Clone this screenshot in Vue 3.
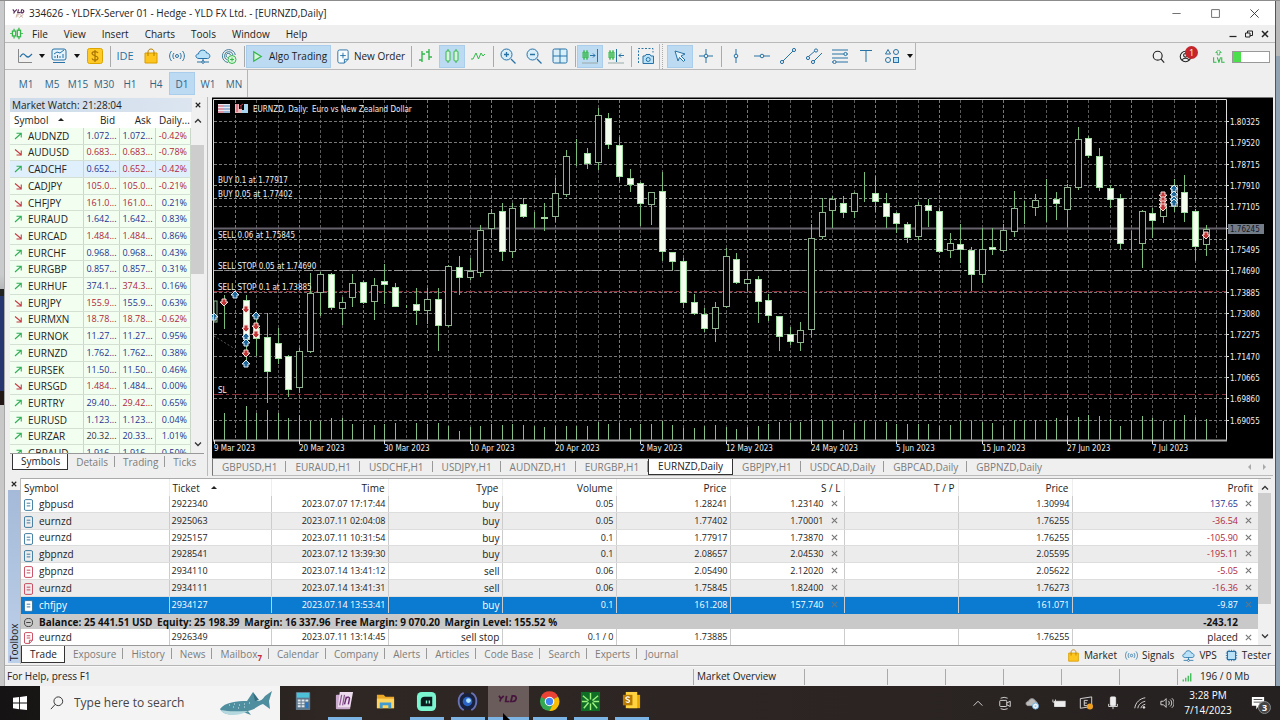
<script setup>
import { ref } from 'vue'

const I = {
  logo: '<path d="M1 3l2 3 3-3M3 6l-1 2M8 3L7 7h3M12 3l-1 4c4 1 5-3 1-4" stroke="#5a2b55" stroke-width="1.4"/><path d="M5 13l1-4h3M6 11h2M10 9l3 4M14 9l-5 4" stroke="#c4a08c"/>',
  mt: '<path d="M5 2v3M5 11v3M11 1v3M11 12v3" stroke="#35b84b" stroke-width="1.6"/><rect x="3" y="5" width="4" height="6" stroke="#35b84b" stroke-width="1.6"/><rect x="9" y="4" width="4" height="8" stroke="#35b84b" stroke-width="1.6"/><path d="M0 8h3M13 8h3" stroke="#35b84b"/>',
  line: '<path d="M1.500 1v13.500H15" stroke="#888"/><path d="M3 9c3-5 4-3 6-1s3 1 6-2" stroke="#2872a6" stroke-width="1.300"/>',
  indic: '<rect x="1" y="1" width="14" height="11" rx="2" fill="#e3f2fb"/><path d="M2 14.500h12M4 10v-2M6.500 10V7M9 10V8M12 10V6M3 6l3-2 3 1 4-3"/>',
  dollar: '<rect x=".5" y=".5" width="15" height="15" rx="2" fill="#ffc928" stroke="#dba400"/><path d="M11 5c-1-2-6-2-6 .500 0 2.500 6 2 6 4.500s-5 3-6 .500M8 2v12" stroke="#a87500" stroke-width="1.200"/>',
  bag: '<path d="M2 5h12v10H2z" fill="#ffc51f" stroke="#d79c00"/><path d="M5 8V4c0-4 6-4 6 0v4" stroke="#b88000"/>',
  signal: '<circle cx="8" cy="8" r="1.500"/><path d="M5 5c-1.500 2-1.500 4 0 6M11 5c1.500 2 1.500 4 0 6M2.500 3c-2.500 3-2.500 7 0 10M13.500 3c2.500 3 2.500 7 0 10"/>',
  cloud: '<path d="M4 10.500C0 10.500 0 6 3.500 6 4 1 11 1 11.500 5c4 0 4.500 5.500 1 5.500z" fill="#b9e1f7"/><path d="M8 10.500v3M2 14h4.500M9.500 14H14"/><circle cx="8" cy="14" r="1.300"/>',
  vps: '<path d="M7 14.500A6.500 6.500 0 1 1 14.300 7M6.500 12A4.300 4.300 0 1 1 12 7M6.500 9.500A2.200 2.200 0 1 1 9.500 7" stroke="#44809b"/><circle cx="11" cy="11.500" r="4" fill="#dcf8df" stroke="#35b84b"/><path d="M11 9.500v4M9 11.500h4" stroke="#35b84b"/>',
  play: '<path d="M4 3l8 5-8 5z" stroke="#35b84b" stroke-width="1.300" fill="#d9f5df"/>',
  order: '<path d="M5 1h7.500q1.500 0 1.500 1.500V11l-4 4H5q-2 0-2-2V3q0-2 2-2zM14 11h-4v4" fill="#f8fcff"/><path d="M8.500 4v6M5.500 7h6"/>',
  bars: '<path d="M4 3v11M1 12h3M4 6h3M11 1v11M8 4h3M11 9h3" stroke="#35b84b" stroke-width="1.400"/>',
  candles: '<path d="M4 1v14M12 1v14" stroke="#35b84b"/><rect x="2" y="3" width="4" height="10" rx="1" fill="#d8f3e0" stroke="#35b84b"/><rect x="10" y="3" width="4" height="10" rx="1" fill="#d8f3e0" stroke="#35b84b"/>',
  zig: '<path d="M1 11h2l3-6 2.500 6L11 5l2 3 2-2" stroke="#35b84b"/>',
  zin: '<circle cx="6.500" cy="6.500" r="5.500" fill="#d8effa"/><path d="M11 11l4.500 4.500M4 6.500h5M6.500 4v5" stroke-width="1.300"/>',
  zout: '<circle cx="6.500" cy="6.500" r="5.500" fill="#d8effa"/><path d="M11 11l4.500 4.500M4 6.500h5" stroke-width="1.300"/>',
  grid: '<rect x="1" y="1" width="14" height="14" rx="1.500" fill="#d8effa"/><path d="M8 1v14M1 8h14"/>',
  scroll: '<path d="M2 2v10M5 2v10M1 4v6h2V4zM4 4v6h2V4z" stroke="#35b84b"/><path d="M8 7.500h5M11 5.500l2 2-2 2M15.500 1v13"/><path d="M0 15h16" stroke="#9aa"/>',
  shift: '<path d="M2 2v10M5 2v10M1 4v6h2V4zM4 4v6h2V4z" stroke="#35b84b"/><path d="M8.500 1v13M16 7.500h-5M13 5.500l-2 2 2 2"/><path d="M0 15h16" stroke="#9aa"/>',
  camera: '<path d="M.5 15V.5H15v4" stroke-dasharray="2 1.500"/><path d="M5 8h2l1-1.500h4L13 8h2.500v7.500H5z" fill="#b9e1f7"/><circle cx="10.200" cy="11.500" r="2"/>',
  cursor: '<path d="M3 3l10 3-4 2 4 4-1.500 1.500-4-4L6 13z" fill="#e3f2fb"/>',
  cross: '<path d="M8 1v14M1 8h14"/><circle cx="8" cy="8" r="1.800" fill="#eee"/>',
  vline: '<path d="M8 1v14"/><circle cx="8" cy="8" r="1.800" fill="#eee"/>',
  hline: '<path d="M0 8h16"/><circle cx="8" cy="8" r="1.800" fill="#eee"/>',
  trend: '<path d="M2 14L14 2"/><circle cx="2" cy="14" r="1.600" fill="#eee"/><circle cx="14" cy="2" r="1.600" fill="#eee"/>',
  channel: '<path d="M2 9l8-7M7 14l9-9"/><circle cx="2" cy="10" r="1.600" fill="#eee"/><circle cx="10" cy="2.500" r="1.600" fill="#eee"/><circle cx="7" cy="14" r="1.600" fill="#eee"/>',
  fibo: '<path d="M0 2h16M0 6h16M0 10h16M0 14h16"/><circle cx="13.500" cy="6" r="1.600" fill="#eee"/><circle cx="2.500" cy="14" r="1.600" fill="#eee"/>',
  text: '<path d="M2 2.500h12M8 2.500V14"/>',
  shapes: '<path d="M4 1.500L6.500 6h-5z"/><circle cx="12" cy="4" r="2.500"/><circle cx="4" cy="12" r="2.500"/><rect x="9.500" y="9.500" width="5" height="5" fill="#b9e1f7"/>',
  search: '<circle cx="7" cy="7" r="5.500" stroke="#222" stroke-width="1.400"/><path d="M11 11l4 4.500" stroke="#222" stroke-width="1.400"/>',
  user: '<circle cx="8" cy="8" r="6.500" stroke="#222" stroke-width="1.300"/><circle cx="8" cy="6.500" r="2.300" stroke="#222" stroke-width="1.300"/><path d="M4 12.500c1-3 7-3 8 0" stroke="#222" stroke-width="1.300"/>',
  lvl: '<path d="M8 0l3.500 3H9.500v3h-3V3H4.500z" stroke="#2fb848"/><path d="M2 9v6h3.500M6.500 9l2 6 2-6M12 9v6h3.500" stroke="#2fb848" stroke-width="1.300"/>',
  chip: '<rect x="3" y="3" width="10" height="10" fill="#b9e1f7" stroke-width="1.400"/><path d="M5 3V1M8 3V1M11 3V1M5 15v-2M8 15v-2M11 15v-2M1 5h2M1 8h2M1 11h2M13 5h2M13 8h2M13 11h2"/>',
  net: '<path d="M2 15v-3M6 15V9M10 15V6M14 15V2" stroke="#2fb848" stroke-width="2"/>',
  min: '<path d="M2 8h12" stroke="#333"/>',
  max: '<rect x="2.500" y="2.500" width="11" height="11" stroke="#333"/>',
  x: '<path d="M2 2l12 12M14 2L2 14" stroke="#333" stroke-width="1.300"/>',
  minB: '<path d="M1 13h14" stroke="#222" stroke-width="2.500"/>',
  xB: '<path d="M2 2l12 12M14 2L2 14" stroke="#222" stroke-width="3"/>',
  xG: '<path d="M2 2l12 12M14 2L2 14" stroke="#777" stroke-width="2.600"/>',
  restore: '<path d="M1 6h9v8H1zM5 6V2h10v9h-5" stroke="#222" stroke-width="2"/>',
  up: '<path d="M2 14L14 3M5 2.500h9.500V11" stroke="#2fae55" stroke-width="2.200"/>',
  down: '<path d="M2 3l12 10M5 14h9.500V5" stroke="#c43c46" stroke-width="2.200"/>',
  chUp: '<path d="M2 11l6-6 6 6" stroke="#333" stroke-width="2.500"/>',
  chDn: '<path d="M2 5l6 6 6-6" stroke="#333" stroke-width="2.500"/>'
}

const menus = ['File', 'View', 'Insert', 'Charts', 'Tools', 'Window', 'Help']
const tools = [
  { k: 'line', t: 'New chart' }, { caret: 8 }, { k: 'indic', t: 'Indicators' }, { caret: 10 },
  { k: 'dollar', t: 'Symbols' }, { sep: 1 }, { label: 'IDE', t: 'IDE' }, { k: 'bag', t: 'Market' },
  { k: 'signal', t: 'Signals' }, { k: 'cloud', t: 'Cloud' }, { k: 'vps', t: 'Virtual hosting' }, { sep: 1 },
  { k: 'play', label: 'Algo Trading', t: 'Algo Trading', wide: 'algo', on: true },
  { k: 'order', label: 'New Order', t: 'New Order', wide: 'order' }, { sep: 1 },
  { k: 'bars', t: 'Bar chart' }, { k: 'candles', t: 'Candlesticks', on: true }, { k: 'zig', t: 'Line chart' }, { sep: 1 },
  { k: 'zin', t: 'Zoom in' }, { k: 'zout', t: 'Zoom out' }, { k: 'grid', t: 'Tile windows' }, { sep: 1 },
  { k: 'scroll', t: 'Auto scroll', on: true }, { k: 'shift', t: 'Chart shift' }, { sep: 1 },
  { k: 'camera', t: 'Screenshot' }, { grip: 1 }, { k: 'cursor', t: 'Cursor', on: true }, { k: 'cross', t: 'Crosshair' }, { sep: 1 },
  { k: 'vline', t: 'Vertical line' }, { k: 'hline', t: 'Horizontal line' }, { k: 'trend', t: 'Trendline' },
  { k: 'channel', t: 'Channel' }, { k: 'fibo', t: 'Fibonacci' }, { k: 'text', t: 'Text' }, { k: 'shapes', t: 'Shapes' }, { caret: 10 }
]
const frames = ['M1', 'M5', 'M15', 'M30', 'H1', 'H4', 'D1', 'W1', 'MN']

// symbol, trend, bid, ask, change, colours of bid and ask (b blue, r red, k black)
const quotes = [
  ['AUDNZD', 'up', '1.072...', '1.072...', '-0.42%', 'bb'], ['AUDUSD', 'down', '0.683...', '0.683...', '-0.78%', 'rr'],
  ['CADCHF', 'up', '0.652...', '0.652...', '-0.42%', 'br'], ['CADJPY', 'down', '105.0...', '105.0...', '-0.21%', 'rr'],
  ['CHFJPY', 'down', '161.0...', '161.0...', '0.21%', 'rr'], ['EURAUD', 'up', '1.642...', '1.642...', '0.83%', 'bb'],
  ['EURCAD', 'down', '1.484...', '1.484...', '0.86%', 'rr'], ['EURCHF', 'up', '0.968...', '0.968...', '0.43%', 'bb'],
  ['EURGBP', 'up', '0.857...', '0.857...', '0.31%', 'bb'], ['EURHUF', 'up', '374.1...', '374.3...', '0.16%', 'br'],
  ['EURJPY', 'down', '155.9...', '155.9...', '0.63%', 'rb'], ['EURMXN', 'down', '18.78...', '18.78...', '-0.62%', 'rr'],
  ['EURNOK', 'up', '11.27...', '11.27...', '0.95%', 'bb'], ['EURNZD', 'up', '1.762...', '1.762...', '0.38%', 'bb'],
  ['EURSEK', 'up', '11.50...', '11.50...', '0.46%', 'bb'], ['EURSGD', 'down', '1.484...', '1.484...', '0.00%', 'rb'],
  ['EURTRY', 'up', '29.40...', '29.42...', '0.65%', 'br'], ['EURUSD', 'up', '1.123...', '1.123...', '0.04%', 'bb'],
  ['EURZAR', 'up', '20.32...', '20.33...', '1.01%', 'kb'], ['GBPAUD', 'up', '1.916...', '1.916...', '0.50%', 'bb']
]
const watchTabs = ['Symbols', 'Details', 'Trading', 'Ticks']

// Price chart: [filled, high, bodyTop, bodyBottom, low], three units to a pixel
const candles = [
  [1, 600, 624, 627, 703], [1, 585, 598, 600, 603], [1, 600, 615, 735, 800], [1, 665, 700, 731, 783], [1, 655, 725, 830, 925],
  [1, 700, 743, 791, 808], [1, 780, 784, 884, 907], [0, 760, 767, 878, 895], [0, 533, 595, 770, 775], [0, 530, 538, 593, 663],
  [1, 533, 536, 640, 645], [0, 605, 622, 643, 690], [0, 537, 563, 610, 637], [1, 557, 562, 625, 628], [0, 550, 570, 622, 674],
  [1, 508, 559, 569, 628], [1, 563, 575, 636, 636], [1, 630, 633, 636, 638], [1, 580, 628, 647, 689], [0, 578, 613, 647, 688],
  [1, 580, 611, 692, 768], [0, 510, 514, 694, 697], [1, 484, 515, 548, 600], [0, 490, 527, 548, 555], [0, 390, 406, 535, 545],
  [0, 343, 355, 402, 430], [1, 323, 349, 470, 497], [0, 325, 340, 470, 488], [1, 310, 328, 365, 368], [1, 350, 368, 371, 400],
  [1, 323, 366, 373, 408], [0, 250, 293, 367, 380], [0, 165, 184, 300, 305], [1, 133, 178, 181, 212], [1, 158, 175, 206, 222],
  [0, 38, 61, 205, 225], [1, 55, 69, 149, 161], [1, 125, 151, 246, 258], [1, 222, 248, 269, 290], [1, 262, 263, 328, 393],
  [0, 292, 292, 329, 390], [1, 232, 288, 470, 497], [1, 470, 472, 500, 526], [1, 490, 497, 625, 640], [1, 596, 621, 656, 660],
  [1, 640, 658, 701, 712], [0, 622, 635, 703, 742], [0, 460, 484, 637, 640], [1, 473, 491, 563, 567], [0, 535, 553, 566, 588],
  [1, 542, 553, 622, 685], [1, 598, 616, 664, 677], [1, 663, 664, 726, 768], [1, 697, 717, 742, 750], [0, 682, 706, 745, 767],
  [0, 388, 430, 706, 725], [0, 310, 352, 427, 432], [0, 303, 313, 349, 398], [1, 303, 325, 353, 370], [0, 290, 295, 352, 368],
  [1, 232, 293, 296, 322], [1, 243, 295, 320, 350], [1, 295, 324, 365, 400], [1, 350, 353, 386, 415], [1, 380, 388, 429, 445],
  [0, 320, 331, 425, 435], [1, 313, 331, 347, 397], [1, 338, 349, 472, 475], [0, 415, 443, 469, 488], [1, 388, 448, 464, 505],
  [1, 455, 466, 541, 587], [0, 400, 462, 539, 565], [1, 398, 457, 464, 480], [0, 388, 405, 469, 470], [0, 287, 340, 412, 425],
  [1, 317, 337, 340, 388], [0, 298, 316, 338, 362], [1, 253, 315, 318, 380], [1, 292, 312, 326, 374], [0, 268, 277, 346, 395],
  [0, 97, 131, 280, 284], [1, 122, 130, 182, 188], [1, 158, 182, 280, 287], [1, 270, 280, 314, 340], [1, 298, 310, 446, 463],
  [1, 408, 444, 447, 473], [0, 346, 349, 448, 518], [1, 340, 355, 377, 430], [0, 290, 330, 366, 385], [0, 253, 270, 337, 350],
  [1, 240, 290, 355, 382], [1, 343, 348, 455, 498], [0, 390, 402, 451, 482]
].map(([f, h, t, b, l], i) => {
  const x = Math.round((43 + 32 * i) / 3)
  const r = v => Math.round(v / 3)
  return { x, f, h: r(h), t: r(t), b: Math.max(r(b), r(t) + 1), l: r(l) }
})
const volumes = [955, 0, 933, 953, 945, 953, 970, 960, 978, 978, 968, 968, 987, 987, 989, 986, 985, 0, 983, 987, 985, 993, 1008, 997, 993,
  987, 990, 986, 990, 992, 995, 992, 993, 993, 993, 980, 987, 983, 998, 986, 986, 978, 990, 998, 998, 992, 990, 996, 1002, 996,
  993, 987, 981, 983, 981, 973, 976, 978, 1005, 983, 977, 980, 982, 988, 987, 988, 987, 992, 990, 978, 978, 981, 985, 993, 976,
  975, 975, 975, 970, 963, 965, 960, 963, 973, 994, 975, 964, 968, 978, 976, 960, 966, 973
].map((v, i) => ({ x: Math.round((43 + 32 * i) / 3), y: Math.round(v / 3), on: v > 0 })).filter(v => v.on)
const vgrid = Array.from({ length: 47 }, (_, k) => ({ x: Math.round((75 + 64 * k) / 3) + 0.5, m: k % 3 === 0 }))
const prices = ['1.80325', '1.79520', '1.78715', '1.77910', '1.77105', '', '1.75495', '1.74690', '1.73885', '1.73080', '1.72275', '1.71470', '1.70665', '1.69860', '1.69055']
  .map((t, k) => ({ t, y: Math.round((78 + 64 * k) / 3) + 0.5 }))
const dates = ['9 Mar 2023', '20 Mar 2023', '30 Mar 2023', '10 Apr 2023', '20 Apr 2023', '2 May 2023', '12 May 2023', '24 May 2023', '5 Jun 2023', '15 Jun 2023', '27 Jun 2023', '7 Jul 2023']
  .map((t, k) => ({ t, x: Math.round((11 + 256 * k) / 3) }))
const orders = [['BUY 0.1 at 1.77917', 88], ['BUY 0.05 at 1.77402', 102], ['SELL 0.06 at 1.75845', 143], ['SELL STOP 0.05 at 1.74690', 174], ['SELL STOP 0.1 at 1.73885', 195], ['SL', 298]]
const marks = [['r', 14, 207], ['b', 25, 200], ['r', 36, 214], ['r', 36, 233], ['b', 36, 242], ['b', 36, 248], ['r', 36, 258], ['b', 36, 269], ['b', 46, 221], ['r', 46, 231], ['r', 46, 239], ['b', 4, 222],
  ['r', 953, 100], ['r', 953, 105], ['r', 953, 109], ['r', 953, 112], ['b', 964, 94], ['b', 964, 100], ['b', 964, 105], ['b', 964, 108], ['r', 996, 140]]
const chartTabs = ['GBPUSD,H1', 'EURAUD,H1', 'USDCHF,H1', 'USDJPY,H1', 'AUDNZD,H1', 'EURGBP,H1', 'EURNZD,Daily', 'GBPJPY,H1', 'USDCAD,Daily', 'GBPCAD,Daily', 'GBPNZD,Daily']

const trades = [
  ['gbpusd', '2922340', '2023.07.07 17:17:44', 'buy', '0.05', '1.28241', '1.23140', '1.30994', '137.65'],
  ['eurnzd', '2925063', '2023.07.11 02:04:08', 'buy', '0.05', '1.77402', '1.70001', '1.76255', '-36.54'],
  ['eurnzd', '2925157', '2023.07.11 10:31:54', 'buy', '0.1', '1.77917', '1.73870', '1.76255', '-105.90'],
  ['gbpnzd', '2928541', '2023.07.12 13:39:30', 'buy', '0.1', '2.08657', '2.04530', '2.05595', '-195.11'],
  ['gbpnzd', '2934110', '2023.07.14 13:41:12', 'sell', '0.06', '2.05490', '2.12020', '2.05622', '-5.05'],
  ['eurnzd', '2934111', '2023.07.14 13:41:31', 'sell', '0.06', '1.75845', '1.82400', '1.76273', '-16.36'],
  ['chfjpy', '2934127', '2023.07.14 13:53:41', 'buy', '0.1', '161.208', '157.740', '161.071', '-9.87']
]
const boxTabs = ['Trade', 'Exposure', 'History', 'News', 'Mailbox', 'Calendar', 'Company', 'Alerts', 'Articles', 'Code Base', 'Search', 'Experts', 'Journal']
const services = [['bag', 'Market'], ['signal', 'Signals'], ['cloud', 'VPS'], ['chip', 'Tester']]

const apps = [
  { n: 'Calculator', s: '<rect x="3" y="1" width="15" height="19" rx="1" fill="#607789"/><rect x="4" y="2" width="13" height="5" fill="#4cc1d8"/><path d="M5 10h3M9 10h3M5 13h3M9 13h3M5 16h3M9 16h3" stroke="#dfe9ef" stroke-width="2"/><path d="M13 10h3" stroke="#dfe9ef" stroke-width="2"/><path d="M13 12h3v6h-3z" fill="#2578c8"/>' },
  { n: 'Journal', run: 1, s: '<rect x="2" y="4" width="15" height="15" rx="1" fill="#c9a9cc"/><path d="M6 1h14l-3 16H4z" fill="#ecdcee"/><path d="M8 4L6 15M11 4L9 15" stroke="#8d5a93" stroke-width="1.300"/><path d="M11 14l2-8M12 9c2-4 5-3 4 0l-1 5" stroke="#6b2c73" stroke-width="1.500" fill="none"/>' },
  { n: 'File Explorer', s: '<path d="M2 4h7l2 2h9v12H2z" fill="#e9a825"/><path d="M2 8h18v10H2z" fill="#ffd45e"/><path d="M5 18v-6h12v6h-3v-3H8v3z" fill="#3f9bd0"/>' },
  { n: 'Streamlabs', run: 1, s: '<rect x="1" y="1" width="20" height="20" rx="5" fill="#7af5d0"/><path d="M5 10q0-4 4-4h8v10H5z" fill="#0c1c1e"/><path d="M11 10v3M14 10v3" stroke="#7af5d0" stroke-width="1.500"/>' },
  { n: 'Camera', run: 1, s: '<circle cx="11" cy="11" r="9" fill="#18213d"/><path d="M7 2C0 5 0 16 7 20M15 2c7 3 7 14 0 18" stroke="#6972b5" stroke-width="2" fill="none"/><circle cx="11" cy="11" r="5" fill="#2b63c4"/><circle cx="12" cy="10" r="2.500" fill="#aee2ff"/>' },
  { n: 'YLD', run: 1, on: 1, s: '<path d="M1 5l2 3 3-3M3 8l-1 3M9 5l-1 6h4M15 5l-1.500 6h2c4 0 5-6 1-6z" stroke="#45153e" stroke-width="1.800" fill="none"/>' },
  { n: 'Chrome', run: 1, s: '<circle cx="11" cy="11" r="10" fill="#34a853"/><path d="M11 11L2 6a10 10 0 0 1 18 0z" fill="#ea4335"/><path d="M11 11L20 6a10 10 0 0 1-9 15l4-8z" fill="#fbbc05"/><circle cx="11" cy="11" r="5" fill="#fff"/><circle cx="11" cy="11" r="3.800" fill="#4285f4"/>' },
  { n: 'Sparks', run: 1, s: '<rect x="1" y="1" width="20" height="20" fill="#0f6d25"/><path d="M11 2v7M11 13v7M3 5l6 5M19 5l-6 5M4 18l5-6M18 18l-5-6M2 11h6M14 11h6" stroke="#9cf07e" stroke-width="1.500"/>' },
  { n: 'Notes', run: 1, s: '<path d="M8 4h12v14H8z" fill="#e8a800"/><path d="M5 1h12v17H5z" fill="#ffd33f"/><rect x="2" y="4" width="10" height="11" fill="#b87b00"/><path d="M9 7c-1-1.500-4-1-4 .500s4 1.500 4 3-3 2-4 .500" stroke="#fff" stroke-width="1.300" fill="none"/>' }
]
const tray = [
  ['Hidden icons', '<path d="M3 11l5-5 5 5"/>'],
  ['Meet now', '<rect x="2" y="5" width="8" height="7" rx="1"/><path d="M10 8l4-2v6l-4-2M3 2.500q4-2 8 0M3 14.500q4 2 8 0"/>'],
  ['OneDrive', '<path d="M3 11c-3-1-2-5 1-5 1-4 7-4 8 0 2 0 3 4 1 5z" fill="#bbb" stroke="#999"/><circle cx="12" cy="11.500" r="3.500" fill="#e9f5ff" stroke="#6aa8d8"/><circle cx="12" cy="11.500" r="1" fill="#2878b8"/>'],
  ['Battery', '<rect x="3" y="6" width="12" height="6" fill="#eee"/><path d="M1 4v3M4 4v2M1 7h3"/>'],
  ['Editor', '<path d="M1.500 3l13-2v11l-13 2z"/><path d="M10 5H6v6h4M6 8h3"/><circle cx="12.500" cy="12" r="3.500" fill="#f0a020" stroke="none"/>'],
  ['Microphone', '<rect x="5" y="1" width="6" height="10" rx="1" fill="#eee"/><path d="M3 9v3h10V9M8 12v3"/>'],
  ['Wi-Fi', '<path d="M2 14C3 7 8 3 14 2M5.500 14c.500-4 4-7 8.500-8M9 14c.500-2 2-4 5-4.500"/><circle cx="12.500" cy="13" r="1" fill="#eee"/>'],
  ['Volume', '<path d="M1 6h3l3-3v10l-3-3H1zM9.500 5.500c1.500 1.500 1.500 3.500 0 5M11.500 4c2.500 2 2.500 6 0 8M13.500 2.500c3.500 3 3.500 8 0 11"/>']
]
const query = ref('')
</script>

<template>
  <div class="screen">
    <div class="desktop">
      <div class="edge left"></div>
      <main class="window">
        <header class="title">
          <svg class="logo" viewBox="0 0 16 16" v-html="I.logo"></svg>
          <span>334626 - YLDFX-Server 01 - Hedge - YLD FX Ltd. - [EURNZD,Daily]</span>
          <div class="winbtns">
            <button v-for="k in ['min', 'max', 'x']" :key="k" :aria-label="k"><svg viewBox="0 0 16 16" v-html="I[k]"></svg></button>
          </div>
        </header>
        <nav class="menu">
          <svg class="mt" viewBox="0 0 16 16" v-html="I.mt"></svg>
          <button v-for="m in menus" :key="m">{{ m }}</button>
          <div class="mdi">
            <button v-for="k in ['minB', 'restore', 'xB']" :key="k" :aria-label="'chart ' + k"><svg viewBox="0 0 16 16" v-html="I[k]"></svg></button>
          </div>
        </nav>
        <div class="bars">
          <div class="bar tools">
            <template v-for="(t, i) in tools" :key="i">
              <i v-if="t.sep" class="sep"></i>
              <i v-else-if="t.grip" class="grip"></i>
              <button v-else-if="t.caret" class="caret" :class="{ w10: t.caret === 10 }" aria-label="more"></button>
              <button v-else class="tool" :class="[t.wide, { on: t.on }]" :aria-label="t.t">
                <svg v-if="t.k" class="ico" viewBox="0 0 16 16" v-html="I[t.k]"></svg>
                <span v-if="t.label" :class="{ ide: !t.k }">{{ t.label }}</span>
              </button>
            </template>
          </div>
          <div class="status-tools">
            <button aria-label="Search"><svg class="ico" viewBox="0 0 16 16" v-html="I.search"></svg></button>
            <button class="acct" aria-label="Account"><svg class="ico" viewBox="0 0 16 16" v-html="I.user"></svg><b>1</b></button>
            <button aria-label="Level"><svg class="ico" viewBox="0 0 16 16" v-html="I.lvl"></svg></button>
            <span class="level"><i></i></span>
          </div>
        </div>
        <div class="bar frames">
          <button v-for="f in frames" :key="f" class="tool" :class="{ on: f === 'D1' }">{{ f }}</button>
        </div>

        <section class="work">
          <aside class="watch">
            <div class="phead"><span>Market Watch: 21:28:04</span><button aria-label="Close"><svg viewBox="0 0 16 16" v-html="I.xB"></svg></button></div>
            <div class="pbody">
              <div class="clip">
                <table class="quotes">
                  <colgroup><col class="q1"><col class="q2"><col class="q2"><col></colgroup>
                  <thead><tr><th>Symbol <i class="sort"></i></th><th>Bid</th><th>Ask</th><th>Daily...</th></tr></thead>
                  <tbody>
                    <tr v-for="q in quotes" :key="q[0]" :class="{ hot: q[0] === 'CADCHF' }">
                      <td><svg class="dir" viewBox="0 0 16 16" v-html="I[q[1]]"></svg>{{ q[0] }}</td>
                      <td :class="q[5][0]">{{ q[2] }}</td><td :class="q[5][1]">{{ q[3] }}</td>
                      <td :class="q[4][0] === '-' ? 'r' : 'b'">{{ q[4] }}</td>
                    </tr>
                  </tbody>
                </table>
              </div>
              <div class="scroll"><svg viewBox="0 0 16 16" v-html="I.chUp"></svg><i class="thumb t1"></i><svg viewBox="0 0 16 16" v-html="I.chDn"></svg></div>
            </div>
            <div class="tabs wtabs"><button v-for="t in watchTabs" :key="t" :class="{ on: t === 'Symbols' }">{{ t }}</button></div>
          </aside>

          <div class="chartcol">
            <div class="chartbox">
              <svg class="chart" viewBox="2 3 1061 360" preserveAspectRatio="xMinYMin meet">
                <rect x="2" y="3" width="1061" height="360" fill="#000" />
                <g class="grid">
                  <line v-for="g in vgrid" :key="g.x" :x1="g.x" :x2="g.x" y1="5" y2="345" :class="{ m: g.m }" />
                  <line v-for="p in prices" :key="p.y" x1="4" x2="1016" :y1="p.y" :y2="p.y" class="m" />
                </g>
                <path d="M4 90.500H1016M4 103.500H1016M4 144.500H1016" class="open-level" />
                <path d="M4 175.500H1016" class="stop-level" />
                <path d="M4 196.500H1016M4 299.500H1016" class="loss-level" />
                <path d="M4 133.500H1016" stroke="#66626b" stroke-width="2" />
                <path d="M4 241L25 254" stroke="#555" stroke-dasharray="2 2" />
                <g stroke="#84c084">
                  <line v-for="v in volumes" :key="v.x" :x1="v.x + 0.5" :x2="v.x + 0.5" :y1="v.y" y2="345" />
                </g>
                <rect x="4" y="206" width="3" height="21" fill="#000" stroke="#8fb38f" />
                <g v-for="c in candles" :key="'c' + c.x" :class="c.f ? 'full' : 'hollow'">
                  <line :x1="c.x + 0.5" :x2="c.x + 0.5" :y1="c.h" :y2="c.l" />
                  <rect :x="c.x - 2.500" :y="c.t + 0.5" width="6" :height="c.b - c.t - 1" />
                </g>
                <path v-for="(m, i) in marks" :key="'m' + i" :transform="`translate(${m[1]} ${m[2]})`"
                  :d="m[0] === 'b' ? 'M0-4L4 0H2V3H-2V0H-4Z' : 'M0 4L4 0H2V-3H-2V0H-4Z'" :class="m[0] === 'b' ? 'mb' : 'mr'" />
                <path d="M3.500 345V4.500H1016.500V345" fill="none" stroke="#ddd" />
                <path d="M3 345.500H1017" stroke="#aaa" stroke-width="2" />
                <g stroke="#ddd">
                  <line v-for="d in dates" :key="d.x" :x1="d.x + 0.5" :x2="d.x + 0.5" y1="345" y2="349" />
                  <line v-for="p in prices" :key="p.y" x1="1016" x2="1019" :y1="p.y" :y2="p.y" />
                </g>
                <g class="lbl">
                  <text v-for="d in dates" :key="d.t" :x="d.x" y="356">{{ d.t }}</text>
                  <text v-for="p in prices" :key="p.y" x="1020" :y="p.y + 3">{{ p.t }}</text>
                  <rect x="1018" y="129" width="36" height="10" fill="#747c88" />
                  <text x="1020" y="137" class="cur">1.76245</text>
                  <text v-for="o in orders" :key="o[0]" x="8" :y="o[1]">{{ o[0] }}</text>
                  <text x="43" y="17">EURNZD, Daily:</text><text x="102" y="17">Euro vs New Zealand Dollar</text>
                </g>
                <g>
                  <rect x="8" y="9" width="12" height="9" fill="#e8e8ee" />
                  <path d="M8 11h6M8 14h6M8 17h6" stroke="#d0445a" /><path d="M14 11h6M14 14h6M14 17h6" stroke="#4a86ba" />
                  <path d="M25 9h4v5h3v4h-7z" fill="#f0b9c0" /><path d="M38 9h-4v6h-2v3h6z" fill="#a7d4ee" /><path d="M27 9v8M30 11l3-2M31 10v4" stroke="#c33c50" />
                </g>
              </svg>
            </div>
            <div class="tabs ctabs">
              <button v-for="t in chartTabs" :key="t" :class="{ on: t === 'EURNZD,Daily' }">{{ t }}</button>
              <span class="arrows"><i></i><i class="r"></i></span>
            </div>
          </div>
        </section>

        <section class="toolbox">
          <div class="side"><button aria-label="Close toolbox"><svg viewBox="0 0 16 16" v-html="I.xB"></svg></button><span>Toolbox</span></div>
          <div class="boxmain">
            <div class="boxbody">
              <table class="trades">
                <colgroup><col class="c1"><col class="c2"><col class="c3"><col v-for="n in 6" :key="n" class="c4"><col></colgroup>
                <thead>
                  <tr><th>Symbol</th><th>Ticket <i class="sort far"></i></th><th>Time</th><th>Type</th><th>Volume</th><th>Price</th><th>S / L</th><th>T / P</th><th>Price</th><th>Profit</th></tr>
                </thead>
                <tbody>
                  <tr v-for="(t, i) in trades" :key="t[1]" :class="{ alt: i % 2, sel: i === 6 }">
                    <td><svg class="doc" :class="{ short: t[3] === 'sell' }" viewBox="0 0 10 13"><rect x=".5" y=".5" width="9" height="12" rx="1.500" /><path d="M3 4.500h4M3 7.500h4" /></svg>{{ t[0] }}</td>
                    <td class="tk">{{ t[1] }}</td><td>{{ t[2] }}</td><td class="w">{{ t[3] }}</td><td>{{ t[4] }}</td><td>{{ t[5] }}</td>
                    <td class="withx">{{ t[6] }}<button aria-label="Remove stop loss"><svg viewBox="0 0 16 16" v-html="I.xG"></svg></button></td>
                    <td></td><td>{{ t[7] }}</td>
                    <td class="withx" :class="t[8][0] === '-' ? 'r' : 'b'">{{ t[8] }}<button aria-label="Close position"><svg viewBox="0 0 16 16" v-html="I.xG"></svg></button></td>
                  </tr>
                  <tr class="sum">
                    <td colspan="9"><svg class="doc ring" viewBox="0 0 10 10"><circle cx="5" cy="5" r="4.500" /><path d="M2.500 5h5" /></svg><span>Balance: 25 441.51 USD</span> <span>Equity: 25 198.39</span> <span>Margin: 16 337.96</span> <span>Free Margin: 9 070.20</span> <span>Margin Level: 155.52 %</span></td>
                    <td>-243.12</td>
                  </tr>
                  <tr>
                    <td><svg class="doc short" viewBox="0 0 10 13"><path d="M2 .5h6q1.500 0 1.500 1.500v7l-3.500 3.500H2Q.5 12.500.5 11V2Q.5.500 2 .5zM9.500 9H6v3.500" /><path d="M3 4h4M3 6.500h4" /></svg>eurnzd</td>
                    <td class="tk">2926349</td><td>2023.07.11 13:14:45</td><td class="w">sell stop</td><td>0.1 / 0</td><td>1.73885</td><td></td><td></td><td>1.76255</td>
                    <td class="withx w">placed<button aria-label="Delete order"><svg viewBox="0 0 16 16" v-html="I.xG"></svg></button></td>
                  </tr>
                </tbody>
              </table>
              <div class="scroll"><svg viewBox="0 0 16 16" v-html="I.chUp"></svg><i class="thumb t2"></i><svg viewBox="0 0 16 16" v-html="I.chDn"></svg></div>
            </div>
            <div class="tabs btabs">
              <button v-for="t in boxTabs" :key="t" :class="{ on: t === 'Trade' }">{{ t }}<sub v-if="t === 'Mailbox'">7</sub></button>
              <div class="services">
                <button v-for="s in services" :key="s[1]"><svg class="ico" viewBox="0 0 16 16" v-html="I[s[0]]"></svg>{{ s[1] }}</button>
              </div>
            </div>
          </div>
        </section>

        <footer class="status">
          <span class="help">For Help, press F1</span><span class="s1">Market Overview</span><span class="s2"></span><span class="s3"></span><span class="s3"></span><span class="s3"></span><span class="s3"></span><span class="s3"></span>
          <span class="s4"><svg class="ico" viewBox="0 0 16 16" v-html="I.net"></svg>196 / 0 Mb</span>
        </footer>
      </main>
      <div class="edge right"></div>
    </div>

    <footer class="taskbar">
      <button class="start" aria-label="Start"><svg viewBox="0 0 16 16"><path d="M0 2l7-1v6.500H0zM8 1l8-1v7.500H8zM0 8.500h7V15l-7-1zM8 8.500h8V16l-8-1z" fill="#fff" /></svg></button>
      <label class="find">
        <svg class="lens" viewBox="0 0 16 16"><circle cx="9.500" cy="6" r="5" /><path d="M6 9.500L1 15" /></svg>
        <input v-model="query" type="text" placeholder="Type here to search" aria-label="Type here to search">
        <svg class="shark" viewBox="0 0 54 26"><path d="M1 19C6 12 18 11 28 11L34 2l4 9c4 0 6-2 8-5L53 1l-3 10 1 8-7-5c-6 2-7 5-15 7l3 4-8-3C14 26 4 25 1 19z" fill="#4f8e9e" /><path d="M2 20c8 2 18 1 27 1-8 5-24 6-27-1z" fill="#b5d8de" /><path d="M10 15h1M15 14h1M20 15h1M25 14h1M30 13h1M14 17h1M19 18h1M25 17h1" stroke="#d4ecef" /><path d="M34 2l2 9 4-1" fill="#356e80" /></svg>
      </label>
      <nav class="apps">
        <button v-for="a in apps" :key="a.n" :class="{ run: a.run, on: a.on }" :aria-label="a.n"><svg viewBox="0 0 22 22" v-html="a.s"></svg></button>
        <svg class="pointer" viewBox="0 0 8 10"><path d="M0 0l8 8H4v2H0z" fill="#000" /></svg>
      </nav>
      <div class="tray">
        <button v-for="t in tray" :key="t[0]" :aria-label="t[0]"><svg viewBox="0 0 16 16" v-html="t[1]"></svg></button>
      </div>
      <div class="clock"><span>3:28 PM</span><span>7/14/2023</span></div>
      <button class="note" aria-label="Notifications"><svg viewBox="0 0 16 16"><path d="M1 1h14v10H9l-3 4v-4H1z" fill="#fff" /><path d="M3 4h10M3 7h10" stroke="#444" /></svg><b>3</b></button>
    </footer>
  </div>
</template>

<style>
body { margin: 0; }
</style>

<style scoped>
* { box-sizing: border-box; }
.screen { min-height: 100vh; display: flex; flex-direction: column; font-family: "Open Sans", "Noto Sans", sans-serif; font-size: 10px; line-height: 14px; color: #222; overflow: hidden; }
button { border: 0; background: none; padding: 0; margin: 0; font: inherit; color: inherit; white-space: nowrap; }
svg { fill: none; display: block; flex: none; }
.desktop { flex: 1; display: grid; grid-template-columns: 5px minmax(0, 1fr) 5px; border-top: 1px solid #8c8c8c; }
.left { background: linear-gradient(#c9cbcc 0 40%, #b5b8ba 42%, #222 42% 43%, #26356f 43% 57%, #211515 57% 59%, #c8c8c8 59%); border-right: 1px solid #a8a8a8; }
.right { background: linear-gradient(#b8b8b8 0 8%, #8fa3b5 8% 100%); border-left: 1px solid #555; }
.window { background: #efefef; display: flex; flex-direction: column; min-width: 0; }

.title { height: 24px; background: #fff; display: flex; align-items: center; padding-left: 7px; }
.logo { width: 13px; height: 13px; margin-right: 4px; }
.winbtns { margin-left: auto; display: flex; padding-right: 1px; }
.winbtns button { width: 39px; display: flex; justify-content: center; }
.winbtns svg { width: 11px; height: 11px; }
.menu { height: 17px; display: flex; align-items: center; padding-left: 5px; gap: 16px; }
.mt { width: 13px; height: 13px; margin-right: -7px; }
.mdi { margin-left: auto; display: flex; padding-right: 2px; }
.mdi button { width: 16px; display: flex; justify-content: center; }
.mdi svg { width: 8px; height: 8px; }

.bars { display: flex; justify-content: space-between; border-top: 1px solid #b9b9b9; }
.bar { display: flex; align-items: center; padding-left: 8px; border-right: 1px solid #b5b5b5; border-bottom: 1px solid #b9b9b9; background: #f0f0f0; }
.tools { height: 27px; padding-left: 7px; }
.frames { height: 27px; align-self: flex-start; border-bottom: 0; color: #2f6585; }
.tool { width: 26px; height: 23px; display: flex; align-items: center; justify-content: center; border: 1px solid transparent; }
.tool.on { background: #bcdaf2; border-color: #a9cdea; }
.ico { width: 16px; height: 16px; stroke: #2872a6; }
.tool.algo { width: 85px; gap: 4px; }
.tool.order { width: 78px; gap: 4px; }
.algo .ico, .order .ico { width: 15px; height: 15px; }
.ide { font-size: 11px; color: #2872a6; }
.sep { width: 4px; height: 21px; background: linear-gradient(#aaa, #aaa) center / 1px 100% no-repeat; }
.grip { width: 8px; height: 25px; border-left: 1px solid #bbb; background: repeating-linear-gradient(#aaa 0 1px, transparent 1px 2px) 2px 0 / 1px 100% no-repeat; }
.caret { width: 8px; height: 22px; display: flex; align-items: center; justify-content: center; }
.caret.w10 { width: 10px; }
.caret::before { content: ""; border: 3px solid transparent; border-top: 4px solid #111; border-bottom: 0; }
.status-tools { display: flex; align-items: center; padding-right: 5px; }
.status-tools button { width: 26px; display: flex; justify-content: center; position: relative; }
.status-tools .ico { width: 13px; height: 13px; }
.status-tools button + button { margin-left: 4px; }
.status-tools .acct { padding-right: 6px; }
.acct b { position: absolute; right: 3px; top: -4px; width: 13px; height: 13px; border-radius: 50%; background: #c4262b; color: #fff; line-height: 13px; font-size: 9px; text-align: center; font-weight: 400; }
.level { width: 38px; height: 12px; border: 1px solid #999; background: #fff; margin-left: 1px; }
.level i { display: block; width: 8px; height: 100%; background: #4be04b; }

.work { display: flex; gap: 4px; }
.watch { width: 203px; padding: 1px 3px 0 5px; display: flex; flex-direction: column; border-right: 1px solid #bbb; flex: none; }
.phead { height: 14px; background: linear-gradient(90deg, #cddbea, #dde6f1); display: flex; justify-content: space-between; align-items: center; padding: 0 0 0 2px; }
.phead button { background: #f0f0f0; width: 12px; height: 14px; display: grid; place-items: center; }
.phead svg { width: 6px; height: 6px; }
.pbody { display: flex; height: 342px; border-bottom: 1px solid #999; }
.clip { flex: 1; overflow: hidden; }
table { border-collapse: collapse; table-layout: fixed; width: 100%; }
th { font-weight: 400; text-align: right; padding: 0 4px; white-space: nowrap; }
th:first-child { text-align: left; }
td { padding: 0; white-space: nowrap; }
.quotes { height: 350px; background: #f2fff0; }
.quotes th { height: 16px; background: #fff; padding-bottom: 1px; }
.quotes td { border-right: 1px solid #c9d6c8; border-bottom: 1px solid #d5e0d4; text-align: right; padding-right: 2px; font-size: 9px; line-height: 12px; }
.quotes td:first-child { font-size: 10px; padding-left: 4px; text-align: left; }
.quotes td:last-child { padding-right: 3px; }
.quotes .hot td { background: #e0effc; }
.q1 { width: 73px; }
.q2 { width: 36px; }
.dir { width: 8px; height: 8px; display: inline-block; margin-right: 6px; }
.r { color: #b0263a; }
.b { color: #27318f; }
.k { color: #333; }
.sort { display: inline-block; border: 3px solid transparent; border-bottom: 3px solid #222; border-top: 0; margin: 0 0 3px 7px; }
.sort.far { margin-left: 9px; }
.scroll { width: 13px; background: #f0f0f0; display: flex; flex-direction: column; align-items: center; padding: 5px 0; }
.scroll svg { width: 8px; height: 8px; }
.scroll svg:last-child { margin-top: auto; }
.thumb { width: 100%; background: #cdcdcd; }
.t1 { height: 129px; margin-top: 20px; }
.t2 { height: 111px; margin-top: 1px; }
.tabs { display: flex; color: #7c7c7c; align-items: flex-start; height: 18px; }
.tabs button { padding: 0 7px 0 8px; height: 16px; line-height: 15px; position: relative; }
.tabs button:not(.on)::after { content: ""; position: absolute; right: 0; top: 2px; height: 11px; border-right: 1px solid #999; }
.tabs button:last-of-type::after { display: none; }
.tabs .on { background: #fff; border: 1px solid #333; border-top: 0; color: #222; }
.wtabs { padding-left: 2px; }

.chartcol { flex: 1; min-width: 0; padding-right: 2px; }
.chartbox { border-top: 1px solid #777; background: #000; }
.chart { width: 100%; height: auto; }
.grid line { stroke: #777; stroke-dasharray: 3 2; opacity: .75; }
.grid .m { opacity: 1; }
.open-level { stroke: #8f958f; stroke-dasharray: 3 2; }
.stop-level { stroke: #999; stroke-dasharray: 9 3 3 3; }
.loss-level { stroke: #88303a; stroke-dasharray: 9 3 3 3; }
.full line, .hollow line { stroke: #79bd79; }
.full rect { fill: #f4fff0; stroke: #9fdc9f; }
.hollow rect { fill: #000; stroke: #8fb38f; }
.mb { fill: #1f6799; stroke: #d8ecf8; }
.mr { fill: #c03636; stroke: #fbdcd8; }
.lbl { font-family: "DejaVu Sans Condensed", "DejaVu Sans", sans-serif; font-size: 8px; fill: #f0f0f0; }
.lbl .cur { fill: #14181e; }
.ctabs { border-top: 1px solid #777; border-left: 1px solid #777; border-bottom: 1px solid #bbb; height: 18px; }
.ctabs button { padding: 0 9px; }
.arrows { margin-left: auto; display: flex; gap: 12px; padding: 5px 7px 0 0; }
.arrows i { border: 3px solid transparent; border-right: 3px solid #aaa; border-left: 0; }
.arrows .r { border: 3px solid transparent; border-left: 3px solid #aaa; border-right: 0; }

.toolbox { display: flex; padding: 2px 4px 1px 3px; flex: 1; border-bottom: 1px solid #b5b5b5; }
.side { width: 12px; display: flex; flex-direction: column; margin-bottom: 1px; }
.side button { height: 12px; display: grid; place-items: center; }
.side svg { width: 6px; height: 6px; }
.side span { flex: 1; background: linear-gradient(#bdd0ea, #a4bad8); writing-mode: vertical-rl; transform: rotate(180deg); line-height: 12px; padding-top: 2px; }
.boxmain { flex: 1; min-width: 0; border-left: 1px solid #bbb; }
.boxbody { display: flex; border-top: 1px solid #aaa; border-bottom: 1px solid #999; background: #fff; height: 168px; overflow: hidden; }
.trades { flex: 1; height: 167px; }
.trades th { height: 17px; padding: 0 3px; border-right: 1px solid #eee; }
.trades th:last-child { padding-right: 5px; }
.trades td { text-align: right; padding: 0 2px; font-size: 9px; line-height: 12px; border-right: 1px solid #ccc; border-bottom: 1px solid #ddd; }
.trades th:nth-child(2), .trades .tk { text-align: left; }
.trades th:last-child, .trades td:last-child { border-right: 0; }
.trades td:first-child, .trades td.w { font-size: 10px; }
.trades td:first-child { text-align: left; padding-left: 3px; }
.trades .c1 { width: 148px; }
.trades .c2 { width: 102px; }
.trades .c3 { width: 117px; }
.trades .c4 { width: 114px; }
.doc { display: inline-block; width: 9px; height: 12px; margin: -1px 6px -1px 0; vertical-align: middle; stroke: #2f6f96; }
.doc.short { stroke: #c23b50; }
.doc.ring { height: 9px; stroke: #333; }
.alt td { background: #ececec; }
.sel td { background: #0b7ad1; color: #fff; border-bottom-color: #0b7ad1; }
.sel .doc rect { fill: #fff; }
.trades .sum td { background: #c9c9c9; font-weight: 700; font-size: 10px; border-right: 0; border-bottom: 0; color: #111; }
.sum td span { margin-right: 2px; }
.trades .sum td:last-child { padding-right: 20px; }
.withx button { display: inline-block; margin: 0 4px 0 7px; }
.withx svg { width: 7px; height: 7px; }
.sel .withx svg { opacity: .8; }
.btabs > button.on { height: 17px; }
.btabs sub { color: #c3263a; font-weight: 700; font-size: 8px; line-height: 8px; }
.services { margin-left: auto; display: flex; gap: 8px; color: #222; padding-top: 1px; }
.services button { display: flex; align-items: center; gap: 4px; padding: 0; }
.services button::after { display: none; }
.services .ico { width: 13px; height: 13px; }

.status { height: 20px; display: flex; align-items: center; border-top: 1px solid #f8f8f8; }
.status span { height: 16px; border-left: 1px solid #aaa; padding-left: 3px; line-height: 15px; }
.status .help { flex: 1; border: 0; padding-left: 2px; }
.status .s1 { width: 111px; }
.status .s2 { width: 83px; }
.status .s3 { width: 58px; }
.status .s4 { width: 98px; display: flex; align-items: center; gap: 8px; padding-left: 4px; }
.s4 .ico { width: 10px; height: 10px; }

.taskbar { height: 34px; flex: none; background: linear-gradient(90deg, #151313, #2e2724 25%, #2b2422 70%, #242120); display: flex; color: #fff; }
.start { width: 40px; display: grid; place-items: center; }
.start svg { width: 14px; height: 14px; }
.find { width: 240px; background: #f4f4f4; display: flex; align-items: center; padding: 0 7px 0 10px; gap: 10px; }
.lens { width: 14px; height: 14px; stroke: #222; stroke-width: 1; }
.find input { flex: 1; min-width: 0; border: 0; padding: 0; background: none; outline: 0; font: 12px/16px "Open Sans", sans-serif; color: #333; }
.find input::placeholder { color: #444; opacity: 1; }
.shark { width: 54px; height: 26px; }
.apps { display: flex; padding-left: 3px; position: relative; }
.apps button { width: 41px; height: 34px; display: grid; place-items: center; padding-bottom: 3px; }
.apps svg { width: 21px; height: 21px; }
.apps button.run { background: linear-gradient(#7db4e6, #7db4e6) center bottom / 34px 3px no-repeat; }
.apps button.on { background: linear-gradient(#7db4e6, #7db4e6) center bottom / 41px 3px no-repeat, #6a5c5a; }
.apps .pointer { position: absolute; left: 223px; bottom: -3px; width: 8px; height: 10px; }
.tray { margin-left: auto; display: flex; align-items: center; }
.tray button { width: 27px; height: 34px; display: grid; place-items: center; }
.tray svg { width: 14px; height: 14px; stroke: #e6e6e6; }
.clock { width: 56px; display: flex; flex-direction: column; align-items: center; justify-content: center; line-height: 15px; }
.note { width: 44px; position: relative; display: grid; place-items: center; }
.note svg { width: 14px; height: 14px; }
.note b { position: absolute; left: 22px; top: 15px; width: 13px; height: 13px; border-radius: 50%; background: #444; border: 1px solid #888; font-size: 9px; line-height: 11px; }
</style>
